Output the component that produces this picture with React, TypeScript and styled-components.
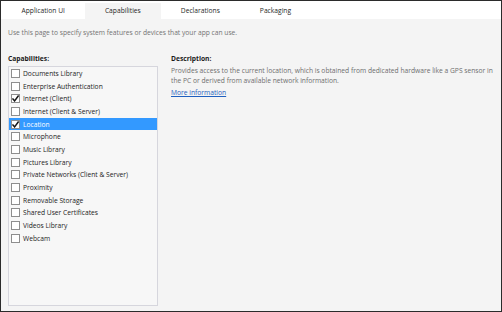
import React from 'react';
import styled, { createGlobalStyle } from 'styled-components';

const GlobalStyle = createGlobalStyle`
  html, body {
    margin: 0;
    padding: 0;
    background: #ffffff;
  }
  body {
    font-family: "Open Sans", "Noto Sans", "DejaVu Sans", sans-serif;
  }
`;

const tabs = ['Application UI', 'Capabilities', 'Declarations', 'Packaging'];

const capabilities = [
  { name: 'Documents Library', checked: false },
  { name: 'Enterprise Authentication', checked: false },
  { name: 'Internet (Client)', checked: true },
  { name: 'Internet (Client & Server)', checked: false },
  { name: 'Location', checked: true, selected: true },
  { name: 'Microphone', checked: false },
  { name: 'Music Library', checked: false },
  { name: 'Pictures Library', checked: false },
  { name: 'Private Networks (Client & Server)', checked: false },
  { name: 'Proximity', checked: false },
  { name: 'Removable Storage', checked: false },
  { name: 'Shared User Certificates', checked: false },
  { name: 'Videos Library', checked: false },
  { name: 'Webcam', checked: false },
];

const App = () => {
  return (
    <>
      <GlobalStyle />
      <Frame>
        <TabStrip>
          {tabs.map((tab) => (
            <Tab key={tab} $active={tab === 'Capabilities'}>
              {tab}
            </Tab>
          ))}
        </TabStrip>

        <Content>
          <Intro>Use this page to specify system features or devices that your app can use.</Intro>

          <Columns>
            <LeftColumn>
              <SectionTitle>Capabilities:</SectionTitle>
              <ListBox>
                {capabilities.map((cap) => (
                  <Row key={cap.name} $selected={Boolean(cap.selected)}>
                    <CheckBox>
                      {cap.checked && (
                        <svg width="7" height="7" viewBox="0 0 7 7">
                          <path
                            d="M0.5 3.4 L2.6 5.9 L6.6 0.5"
                            fill="none"
                            stroke="#141414"
                            strokeWidth="1.5"
                          />
                        </svg>
                      )}
                    </CheckBox>
                    <RowLabel $selected={Boolean(cap.selected)}>{cap.name}</RowLabel>
                  </Row>
                ))}
              </ListBox>
            </LeftColumn>

            <RightColumn>
              <SectionTitle>Description:</SectionTitle>
              <Description>
                {'Provides access to the current location, which is obtained from dedicated hardware like a GPS sensor in\nthe PC or derived from available network information.'}
              </Description>
              <MoreLink href="#">More information</MoreLink>
            </RightColumn>
          </Columns>
        </Content>
      </Frame>
    </>
  );
};

const Frame = styled.div`
  width: 502px;
  height: 312px;
  box-sizing: border-box;
  border: 1px solid #2b2b2b;
  display: flex;
  flex-direction: column;
  background: #f4f4f4;
  overflow: hidden;
`;

const TabStrip = styled.div`
  height: 18px;
  display: flex;
  align-items: flex-end;
  padding-left: 0.5px;
  background: #ffffff;
`;

const Tab = styled.div<{ $active: boolean }>`
  height: 15px;
  padding: 0 20px 1px 20px;
  display: flex;
  align-items: center;
  font-size: 6.7px;
  color: #1f1f1f;
  background: ${(p) => (p.$active ? '#f4f4f4' : 'transparent')};
  white-space: nowrap;
`;

const Content = styled.div`
  flex: 1;
  display: flex;
  flex-direction: column;
  padding: 8px 2px 5px 7px;
  min-height: 0;
`;

const Intro = styled.p`
  margin: 0;
  font-size: 6.7px;
  line-height: 12px;
  color: #737373;
`;

const Columns = styled.div`
  flex: 1;
  display: flex;
  gap: 13px;
  margin-top: 14px;
  min-height: 0;
`;

const LeftColumn = styled.div`
  width: 150px;
  flex-shrink: 0;
  display: flex;
  flex-direction: column;
`;

const RightColumn = styled.div`
  flex: 1;
  display: flex;
  flex-direction: column;
  align-items: flex-start;
`;

const SectionTitle = styled.div`
  font-size: 6.7px;
  font-weight: 700;
  line-height: 12px;
  color: #1a1a1a;
  margin-bottom: 1px;
`;

const ListBox = styled.div`
  flex: 1;
  border: 1px solid #d6d6dd;
  background: #f7f7f7;
  display: flex;
  flex-direction: column;
`;

const Row = styled.div<{ $selected: boolean }>`
  height: 12.7px;
  display: flex;
  align-items: center;
  gap: 3px;
  padding-left: 2px;
  margin-right: 0.5px;
  background: ${(p) => (p.$selected ? '#3399ff' : 'transparent')};
`;

const CheckBox = styled.span`
  width: 7px;
  height: 7px;
  border: 1px solid #8e8e8e;
  background: #ffffff;
  display: flex;
  align-items: center;
  justify-content: center;
  flex-shrink: 0;
`;

const RowLabel = styled.span<{ $selected: boolean }>`
  font-size: 6.7px;
  color: ${(p) => (p.$selected ? '#ffffff' : '#222222')};
  white-space: nowrap;
`;

const Description = styled.p`
  margin: 0;
  font-size: 6.7px;
  line-height: 10px;
  color: #6e6e6e;
  white-space: pre;
`;

const MoreLink = styled.a`
  margin-top: 1px;
  font-size: 6.7px;
  line-height: 11px;
  color: #1f5fbf;
  text-decoration: underline;
`;

export default App;
